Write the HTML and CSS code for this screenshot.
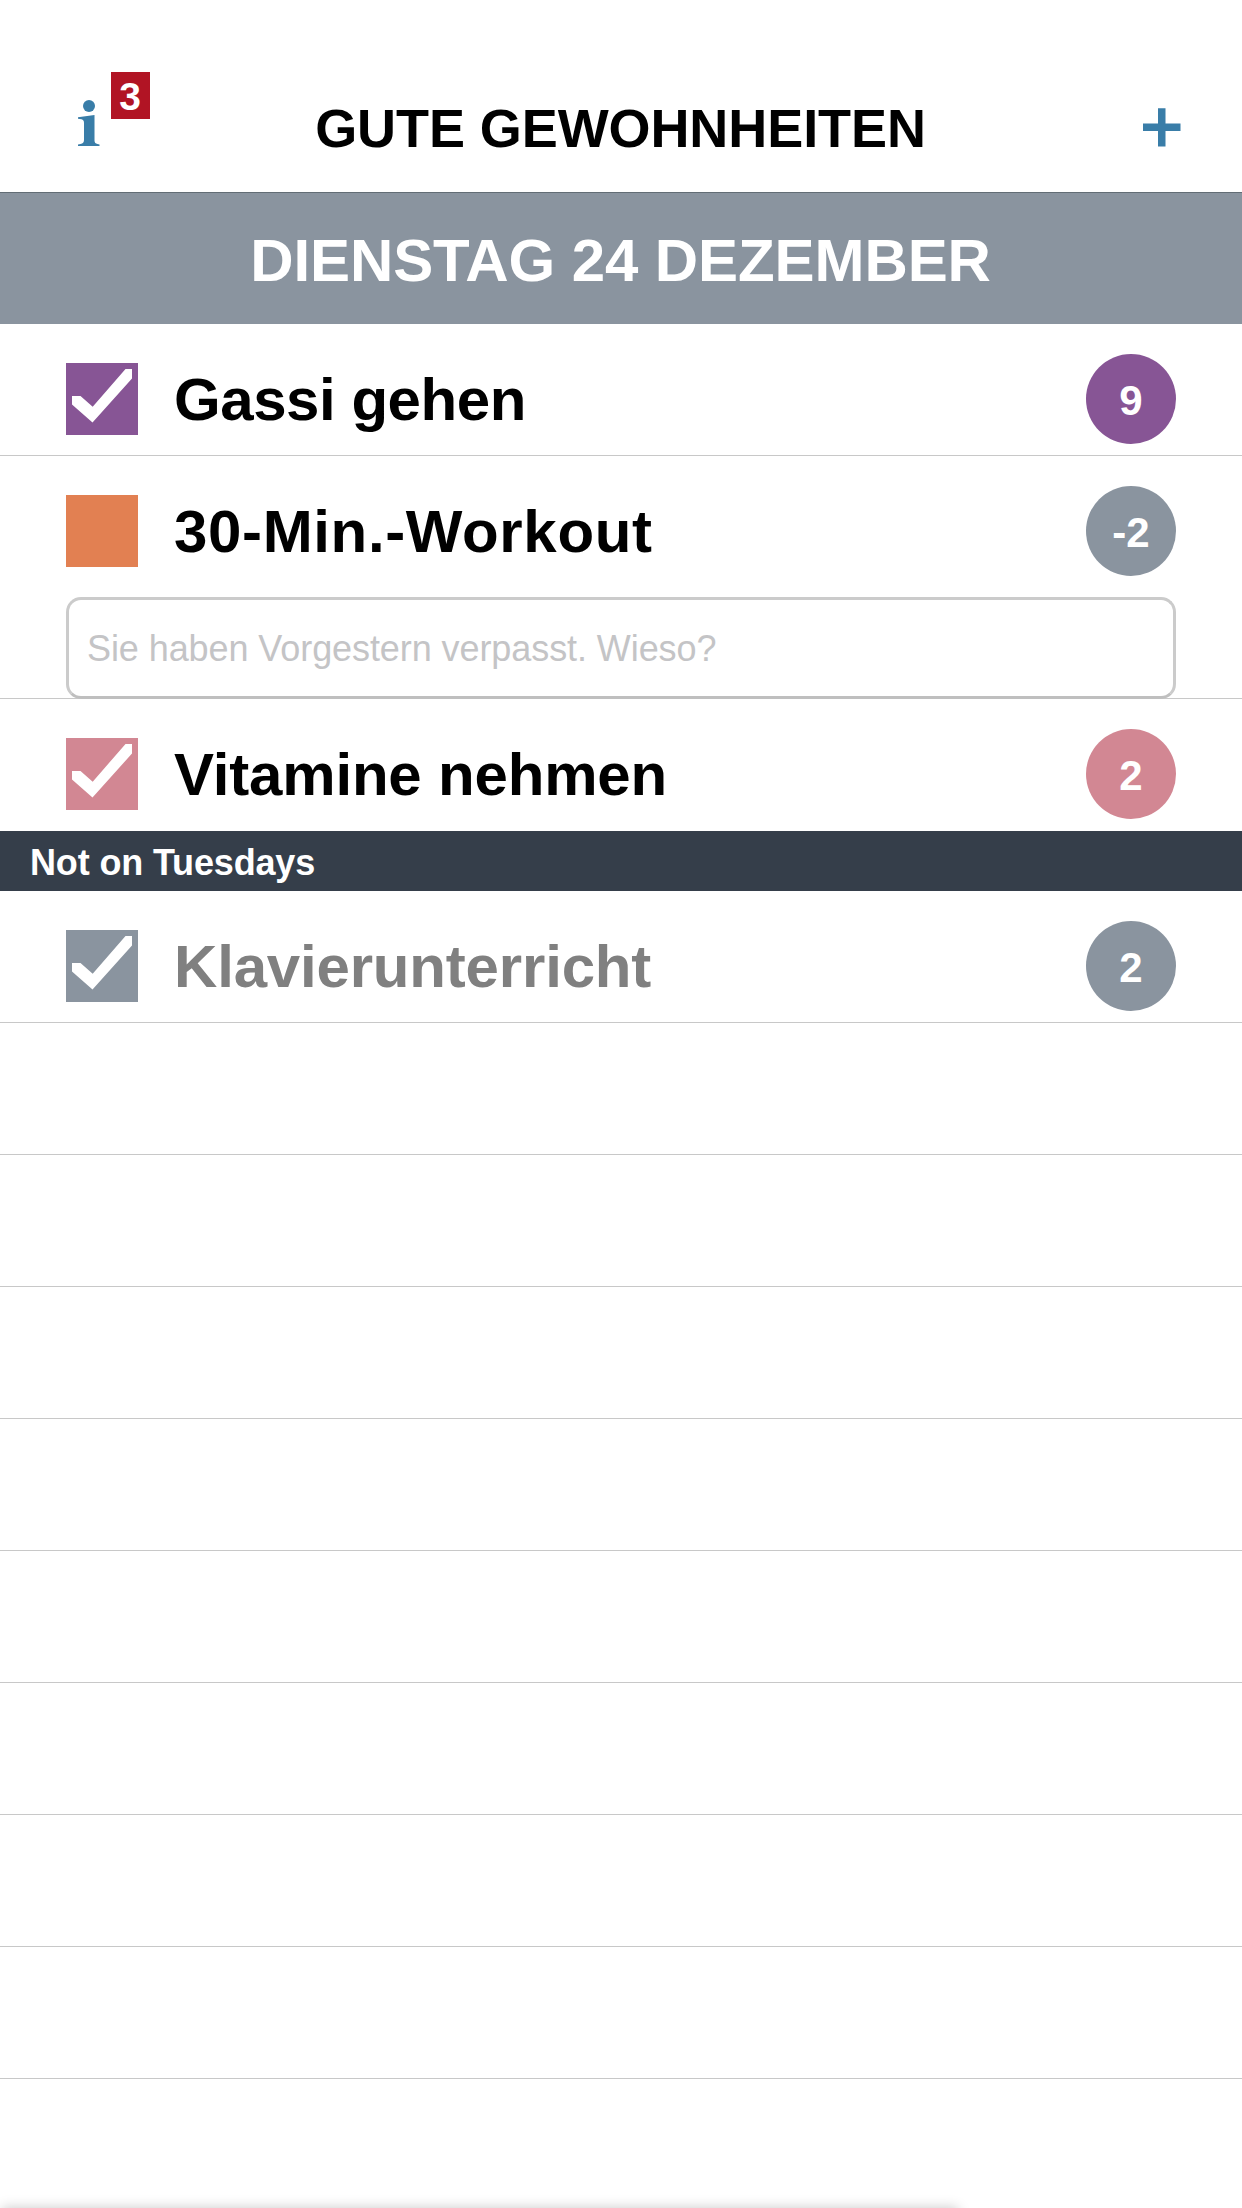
FILE: index.html
```html
<!DOCTYPE html>
<html lang="de">
<head>
<meta charset="utf-8">
<title>Gute Gewohnheiten</title>
<link rel="stylesheet" href="styles.css">
</head>
<body>
<div class="app">
  <header class="topbar">
    <div class="info">
      <svg class="info-icon" width="24" height="48" viewBox="0 0 24 48" aria-hidden="true"><circle cx="11" cy="6" r="6"/><path d="M0 17.200L16.500 15V40.500Q16.500 43.500 19.500 44L21.500 44.500V46H0V44.500L2.500 44Q6 43.300 6 40V23Q6 19.800 3.500 19.300L0 18.800Z"/></svg>
      <span class="badge">3</span>
    </div>
    <h1 class="title">GUTE GEWOHNHEITEN</h1>
    <svg class="plus" width="38" height="40" viewBox="0 0 38 40" aria-hidden="true"><path d="M15 .3h7.500v15.200h15v7.500h-15v15.600h-7.500v-15.600h-15v-7.500h15z"/></svg>
  </header>
  <h2 class="date">DIENSTAG 24 DEZEMBER</h2>
  <main class="list">
    <section class="row">
      <div class="habit">
        <span class="check purple"><svg width="72" height="72" viewBox="0 0 72 72"><path d="M6 33H14.500L26.700 43.700L59.500 6H66V15.500L26.500 59.500L6 41.500Z"/></svg></span>
        <span class="name tight">Gassi gehen</span>
        <span class="count purple">9</span>
      </div>
    </section>
    <section class="row">
      <div class="habit">
        <span class="check orange"></span>
        <span class="name wide">30-Min.-Workout</span>
        <span class="count gray">-2</span>
      </div>
      <div class="note">Sie haben Vorgestern verpasst. Wieso?</div>
    </section>
    <section class="row last">
      <div class="habit">
        <span class="check pink"><svg width="72" height="72" viewBox="0 0 72 72"><path d="M6 33H14.500L26.700 43.700L59.500 6H66V15.500L26.500 59.500L6 41.500Z"/></svg></span>
        <span class="name">Vitamine nehmen</span>
        <span class="count pink">2</span>
      </div>
    </section>
    <h3 class="divider">Not on Tuesdays</h3>
    <section class="row inactive">
      <div class="habit">
        <span class="check gray"><svg width="72" height="72" viewBox="0 0 72 72"><path d="M6 33H14.500L26.700 43.700L59.500 6H66V15.500L26.500 59.500L6 41.500Z"/></svg></span>
        <span class="name">Klavierunterricht</span>
        <span class="count gray">2</span>
      </div>
    </section>
    <div class="row empty"></div>
    <div class="row empty"></div>
    <div class="row empty"></div>
    <div class="row empty"></div>
    <div class="row empty"></div>
    <div class="row empty"></div>
    <div class="row empty"></div>
    <div class="row empty"></div>
  </main>
  <div class="sheet"></div>
</div>
</body>
</html>
```
FILE: styles.css
```css
* { box-sizing: border-box; }
body { margin: 0; background: #fff; font-family: "Liberation Sans", Arial, sans-serif; }
h1, h2, h3 { margin: 0; font-weight: bold; }
.app { position: relative; width: 1242px; height: 2208px; overflow: hidden; background: #fff; }

.topbar { display: grid; grid-template-columns: 1fr auto 1fr; align-items: center; height: 192px; padding: 64px 61px 0 78px; }
.info { position: relative; height: 48px; margin-top: -8px; }
.info-icon { display: block; fill: #397da8; }
.badge { position: absolute; left: 33px; top: -28px; width: 39px; height: 47px; padding: 2px 1px 0 0; background: #b11424; color: #fff; font-size: 39px; font-weight: bold; line-height: 45px; text-align: center; }
.title { font-size: 54px; line-height: 64px; margin-left: -18px; letter-spacing: -.08px; white-space: nowrap; }
.plus { justify-self: end; fill: #397da8; }

.date { height: 132px; padding: 4px 1px 0 0; border-top: 1px solid #626d75; background: #8a949f; color: #fff; font-size: 60px; line-height: 127px; letter-spacing: -.08px; text-align: center; }

.row { border-bottom: 1px solid #c8c8c8; }
.row.last { border-bottom-color: transparent; }
.empty { height: 132px; }
.habit { display: flex; align-items: center; height: 131px; padding: 19px 66px 0; }
.check { width: 72px; height: 72px; }
.check svg { display: block; fill: #fff; }
.name { flex: 1; padding: 2px 0 0 36px; font-size: 60px; line-height: 70px; letter-spacing: -.18px; font-weight: bold; color: #000; white-space: nowrap; }
.name.tight { letter-spacing: -.45px; }
.name.wide { letter-spacing: .65px; }
.inactive .name { color: #808080; }
.count { width: 90px; height: 90px; padding-top: 3px; border-radius: 50%; color: #fff; font-size: 42px; font-weight: bold; line-height: 87px; text-align: center; }
.purple { background: #875595; }
.orange { background: #e28052; }
.pink { background: #d28793; }
.gray { background: #8a949f; }

.note { height: 102px; margin: 10px 66px -1px; padding: 1px 0 0 18px; border: 3px solid #cbcbcb; border-bottom-color: #bfbfbf; border-radius: 15px; color: #c4c4c6; font-size: 36px; line-height: 96px; letter-spacing: -.08px; }
.divider { height: 60px; padding: 3px 30px 0; background: #353e4a; color: #fff; font-size: 36px; line-height: 57px; letter-spacing: -.15px; }

/* Top shadow of the sheet parked below the screen */
.sheet { position: absolute; left: 2px; top: 2208px; width: 956px; height: 60px; box-shadow: 0 0 12px rgba(0, 0, 0, .22); }
```
